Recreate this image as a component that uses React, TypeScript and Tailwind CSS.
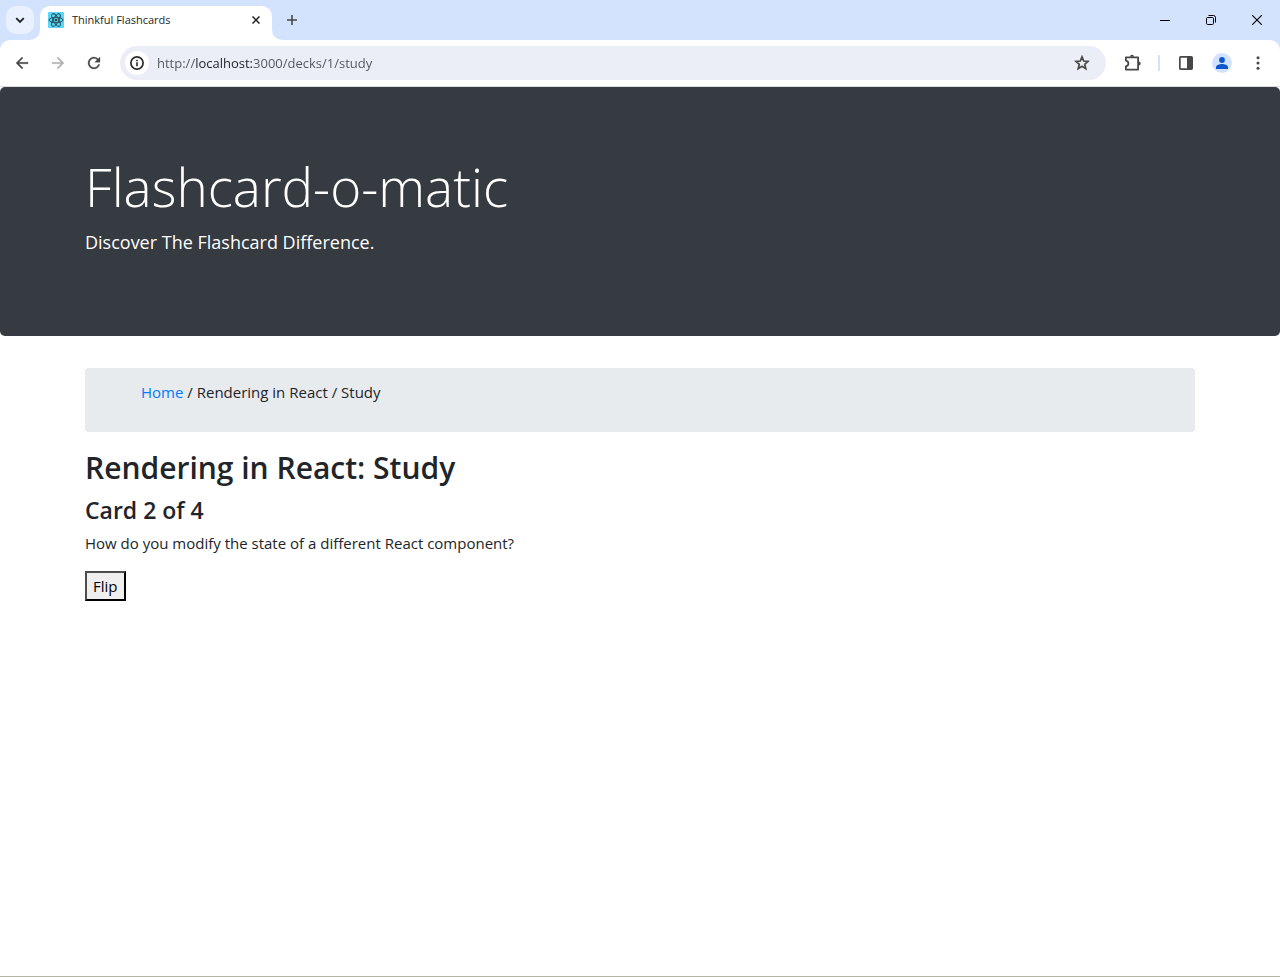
import type { ReactNode } from 'react';

function IconButton({ label, className = '', children }: { label: string; className?: string; children: ReactNode }) {
  return (
    <button type="button" aria-label={label} className={`flex size-7 shrink-0 items-center justify-center rounded-full ${className}`}>
      {children}
    </button>
  );
}

function ReactLogo() {
  return (
    <svg viewBox="0 0 16 16" className="size-4 shrink-0" aria-hidden="true">
      <rect width="16" height="16" rx="1" fill="#5ad6f5" />
      <g fill="none" stroke="#24434f" strokeWidth=".9">
        <ellipse cx="8" cy="8" rx="7" ry="2.7" />
        <ellipse cx="8" cy="8" rx="7" ry="2.7" transform="rotate(60 8 8)" />
        <ellipse cx="8" cy="8" rx="7" ry="2.7" transform="rotate(120 8 8)" />
      </g>
      <circle cx="8" cy="8" r="1.3" fill="#24434f" />
    </svg>
  );
}

function TabFlare({ className }: { className: string }) {
  return (
    <svg viewBox="0 0 10 10" className={`absolute bottom-0 size-2.5 ${className}`} aria-hidden="true">
      <path d="M10 0A10 10 0 0 1 0 10H10Z" fill="#fff" />
    </svg>
  );
}

function TabStrip() {
  return (
    <div className="flex h-10 items-start bg-[#d3e3fd]">
      <button type="button" aria-label="Search tabs" className="mt-1.5 ml-1.5 flex size-7 items-center justify-center rounded-[10px] bg-[#e9f1fe]">
        <svg viewBox="0 0 10 10" className="size-2.5" fill="none" stroke="#1f1f1f" strokeWidth="1.8">
          <path d="M1.2 3.2L5 7L8.8 3.2" />
        </svg>
      </button>
      <div className="relative mt-1.5 ml-1.5 flex h-[34px] w-[232px] items-center rounded-t-[10px] bg-white pb-1.5 pl-2">
        <TabFlare className="-left-2.5" />
        <TabFlare className="-right-2.5 -scale-x-100" />
        <ReactLogo />
        <span className="ml-2 flex-1 text-[11px] leading-4 text-[#1f1f1f]">Thinkful Flashcards</span>
        <button type="button" aria-label="Close tab" className="mr-2 flex size-4 items-center justify-center">
          <svg viewBox="0 0 8 8" className="size-2" fill="none" stroke="#1f1f1f" strokeWidth="1.5">
            <path d="M.5.5l7 7M7.5.5l-7 7" />
          </svg>
        </button>
      </div>
      <button type="button" aria-label="New tab" className="mt-1.5 ml-1.5 flex size-7 items-center justify-center">
        <svg viewBox="0 0 10 10" className="size-2.5" stroke="#474747" strokeWidth="1.6">
          <path d="M5 0v10M0 5h10" />
        </svg>
      </button>
      <div className="ml-auto flex">
        <button type="button" aria-label="Minimize" className="flex h-10 w-[46px] items-center justify-center">
          <svg viewBox="0 0 10 10" className="size-2.5" shapeRendering="crispEdges"><path d="M0 5h10v1H0z" fill="#000" /></svg>
        </button>
        <button type="button" aria-label="Restore" className="flex h-10 w-[46px] items-center justify-center">
          <svg viewBox="0 0 10 10" className="size-2.5" fill="none" stroke="#000">
            <rect x=".5" y="2.5" width="7" height="7" rx="1.2" />
            <path d="M2.5.5H7.5Q9.5.5 9.5 2.5V7.5" />
          </svg>
        </button>
        <button type="button" aria-label="Close window" className="flex h-10 w-[46px] items-center justify-center">
          <svg viewBox="0 0 10 10" className="size-2.5" fill="none" stroke="#000" strokeWidth="1.1">
            <path d="M0 0l10 10M10 0L0 10" />
          </svg>
        </button>
      </div>
    </div>
  );
}

const arrow = 'M20 11H7.83l5.59-5.59L12 4l-8 8 8 8 1.41-1.41L7.83 13H20v-2z';

function Toolbar() {
  return (
    <div className="bg-[#d3e3fd]">
      <div className="flex h-[47px] items-center rounded-t-[10px] border-b border-[#dcdcdc] bg-white px-2">
        <IconButton label="Back">
          <svg viewBox="0 0 24 24" className="size-[18px]" fill="#474747" stroke="#474747" strokeWidth=".4"><path d={arrow} /></svg>
        </IconButton>
        <IconButton label="Forward" className="ml-2">
          <svg viewBox="0 0 24 24" className="size-[18px] -scale-x-100" fill="#b0b0b0" stroke="#b0b0b0" strokeWidth=".4"><path d={arrow} /></svg>
        </IconButton>
        <IconButton label="Reload" className="ml-2">
          <svg viewBox="0 0 24 24" className="size-[18px]" fill="#474747" stroke="#474747" strokeWidth=".4">
            <path d="M17.65 6.35A7.958 7.958 0 0 0 12 4c-4.42 0-7.99 3.58-7.99 8s3.57 8 7.99 8c3.73 0 6.84-2.55 7.73-6h-2.08A5.99 5.99 0 0 1 12 18c-3.31 0-6-2.69-6-6s2.69-6 6-6c1.66 0 3.14.69 4.22 1.78L13 11h7V4l-2.35 2.35z" />
          </svg>
        </IconButton>
        <div className="ml-3 flex h-[34px] flex-1 items-center rounded-full bg-[#ebeef7] pr-2.5 pl-[5px]">
          <button type="button" aria-label="Site information" className="flex size-6 items-center justify-center rounded-full bg-white">
            <svg viewBox="0 0 14 14" className="size-3.5">
              <circle cx="7" cy="7" r="6.1" fill="none" stroke="#2b2b2b" strokeWidth="1.7" />
              <path d="M6.2 6.2h1.6v4.1h-1.6zM6.2 3.7h1.6v1.5h-1.6z" fill="#2b2b2b" />
            </svg>
          </button>
          <input
            type="text"
            aria-label="Address"
            defaultValue="http://localhost:3000/decks/1/study"
            className="ml-2 h-6 min-w-0 flex-1 bg-[linear-gradient(to_right,#50545a_39px,#1f1f1f_39px,#1f1f1f_95px,#50545a_95px)] bg-clip-text text-[13px] text-transparent caret-black outline-none"
          />
          <IconButton label="Bookmark this page">
            <svg viewBox="0 0 16 16" className="size-4" fill="none" stroke="#474747" strokeWidth="1.7" strokeLinejoin="miter">
              <path d="M8 1.9L9.7 6L14.1 6.35L10.75 9.25L11.8 13.6L8 11.25L4.2 13.6L5.25 9.25L1.9 6.35L6.3 6Z" />
            </svg>
          </IconButton>
        </div>
        <IconButton label="Extensions" className="ml-3">
          <svg viewBox="0 0 18 18" className="size-[18px]">
            <path d="M2.9 3.4H15.1V15.6H2.9V12.4C4.5 12.1 5.4 11 5.4 9.5S4.5 6.9 2.9 6.6Z" fill="none" stroke="#474747" strokeWidth="1.8" strokeLinejoin="round" />
            <path d="M7 2.7a2 2 0 0 1 4 0zM15.7 7.5a2 2 0 0 1 0 4z" fill="#474747" />
          </svg>
        </IconButton>
        <span className="ml-3 h-4 w-0.5 bg-[#d3e3fd]" />
        <IconButton label="Side panel" className="ml-3">
          <svg viewBox="0 0 14 14" className="size-3.5">
            <rect x=".85" y=".85" width="12.3" height="12.3" rx=".8" fill="none" stroke="#474747" strokeWidth="1.7" />
            <path d="M8 1h5v12H8z" fill="#474747" />
          </svg>
        </IconButton>
        <IconButton label="Profile" className="ml-2">
          <svg viewBox="0 0 20 20" className="size-5">
            <circle cx="10" cy="10" r="10" fill="#d3e3fd" />
            <circle cx="10" cy="7" r="2.9" fill="#0b57d0" />
            <path d="M4 16V14.2C4 12.2 7.7 11.1 10 11.1S16 12.2 16 14.2V16Z" fill="#0b57d0" />
          </svg>
        </IconButton>
        <IconButton label="Menu" className="ml-2">
          <svg viewBox="0 0 4 14" className="h-3.5 w-1" fill="#474747">
            <circle cx="2" cy="1.7" r="1.5" /><circle cx="2" cy="7" r="1.5" /><circle cx="2" cy="12.3" r="1.5" />
          </svg>
        </IconButton>
      </div>
    </div>
  );
}

export default function App() {
  return (
    <div className="flex min-h-screen flex-col border-b border-[#b5b5a5] bg-white font-['Open_Sans','Noto_Sans',sans-serif] text-[#212529]">
      <TabStrip />
      <Toolbar />
      <header className="rounded-[5px] bg-[#363a41] py-16 text-white">
        <div className="mx-auto max-w-[1140px] px-[15px]">
          <h1 className="text-[53px] leading-[72px] font-light">Flashcard-o-matic</h1>
          <p className="mt-1.5 mb-4 text-[18px] leading-[27px]">Discover The Flashcard Difference.</p>
        </div>
      </header>
      <main className="mx-auto mt-8 w-full max-w-[1140px] px-[15px]">
        <nav aria-label="Breadcrumb" className="h-16 rounded bg-[#e8ebee] px-14 pt-3 text-[15px] leading-6">
          <a href="#home" className="text-[#007bff]">Home</a> / Rendering in React / Study
        </nav>
        <h2 className="mt-4 text-[30px] leading-10 font-semibold">Rendering in React: Study</h2>
        <h3 className="mt-2 text-[23px] leading-[29px] font-semibold">Card 2 of 4</h3>
        <p className="mt-1.5 text-[15px] leading-6">How do you modify the state of a different React component?</p>
        <button type="button" className="mt-4 h-[30px] border-2 border-t-[#4c4c4c] border-r-black border-b-black border-l-[#4c4c4c] bg-[#efefef] px-1.5 text-[15px] leading-6 text-black">Flip</button>
      </main>
    </div>
  );
}
